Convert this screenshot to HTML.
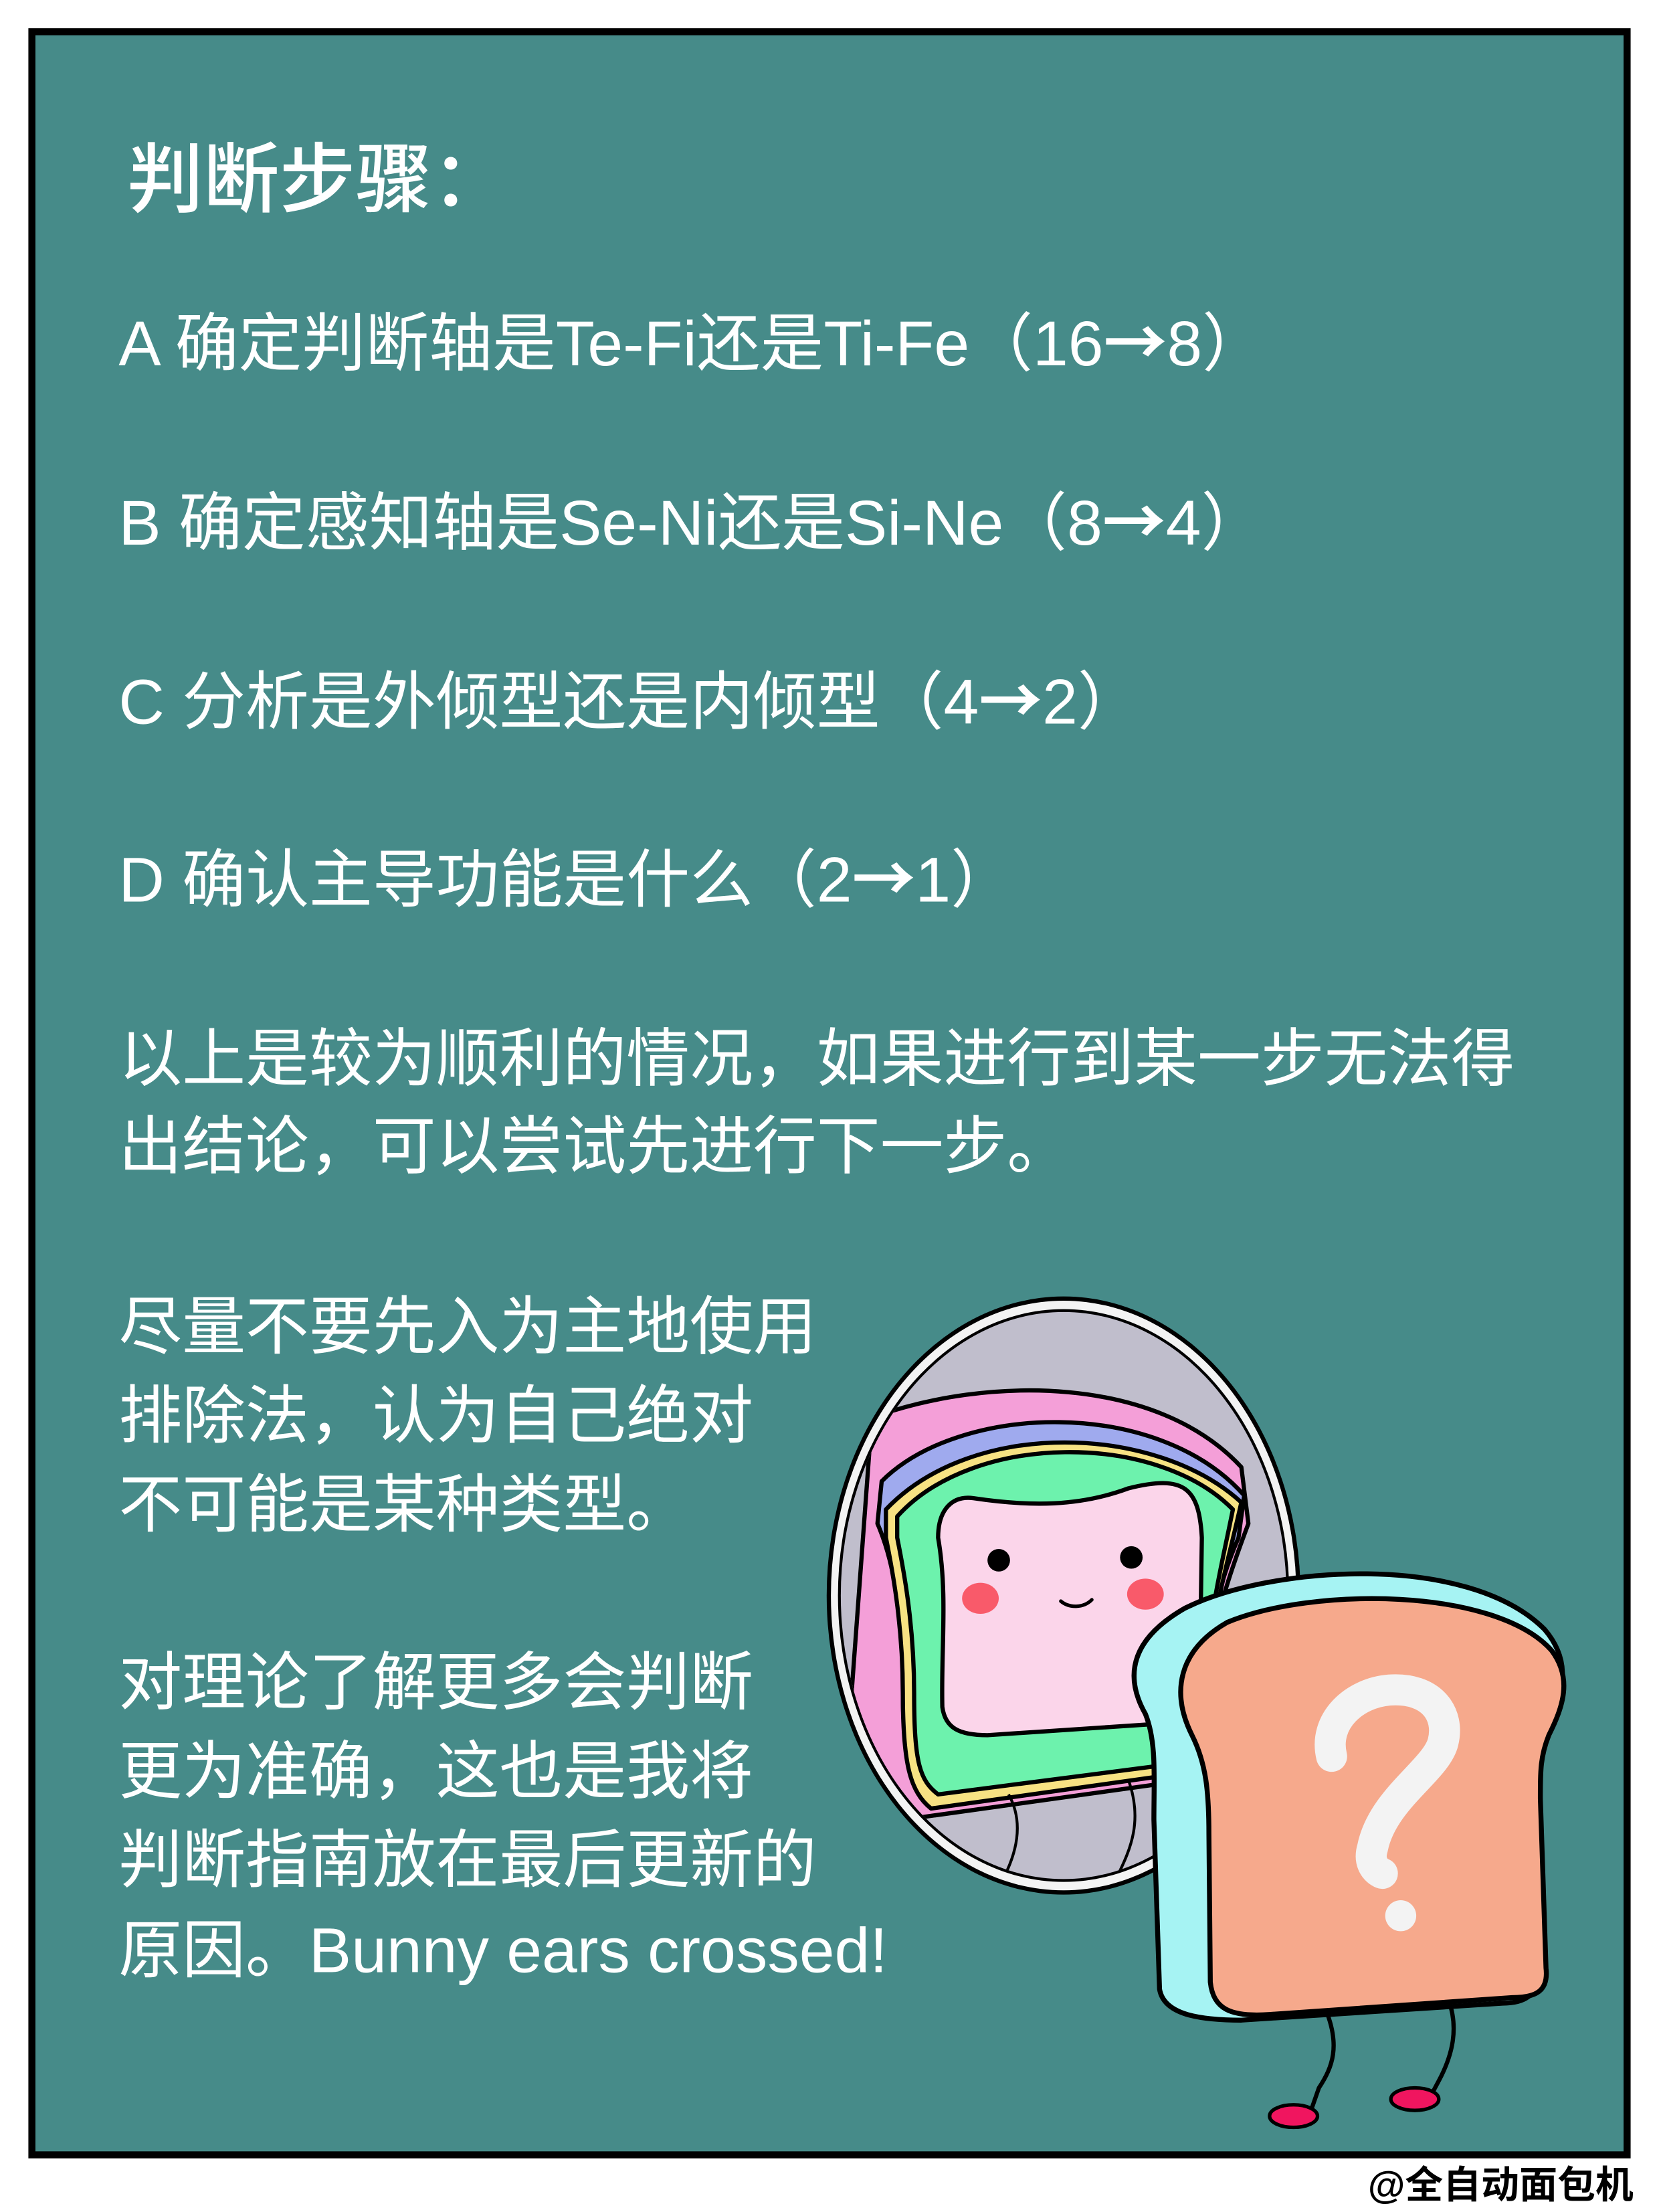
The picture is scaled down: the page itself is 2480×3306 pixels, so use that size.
<!DOCTYPE html>
<html><head><meta charset="utf-8"><style>
html,body{margin:0;padding:0;background:#fff;}
svg{display:block;}
text{font-family:"Liberation Sans","Noto Sans CJK SC",sans-serif;fill:#fff;}
.ar{font-family:"Noto Sans CJK SC",sans-serif;font-weight:bold;}
</style></head><body>
<svg width="2480" height="3306" viewBox="0 0 1176 1568" xmlns="http://www.w3.org/2000/svg">
<rect x="0" y="0" width="1176" height="1568" fill="#fff"/>
<rect x="22.5" y="22.5" width="1131" height="1505" fill="#468B89" stroke="#000" stroke-width="5"/>

<text x="90" y="146" font-size="54" style="font-family:'Noto Sans CJK SC',sans-serif;font-weight:500">判断步骤：</text>
<g font-size="45">
<text x="84" y="259">A 确定判断轴是Te-Fi还是Ti-Fe（16<tspan class="ar">→</tspan>8）</text>
<text x="84" y="386">B 确定感知轴是Se-Ni还是Si-Ne（8<tspan class="ar">→</tspan>4）</text>
<text x="84" y="513">C 分析是外倾型还是内倾型（4<tspan class="ar">→</tspan>2）</text>
<text x="84" y="639">D 确认主导功能是什么（2<tspan class="ar">→</tspan>1）</text>
<text x="84" y="766">以上是较为顺利的情况，如果进行到某一步无法得</text>
<text x="84" y="828">出结论，可以尝试先进行下一步。</text>
<text x="84" y="956">尽量不要先入为主地使用</text>
<text x="84" y="1019">排除法，认为自己绝对</text>
<text x="84" y="1082">不可能是某种类型。</text>
<text x="84" y="1208">对理论了解更多会判断</text>
<text x="84" y="1271">更为准确，这也是我将</text>
<text x="84" y="1334">判断指南放在最后更新的</text>
<text x="84" y="1398">原因。Bunny ears crossed!</text>
</g>

<defs><clipPath id="m"><ellipse cx="754" cy="1131" rx="158" ry="201"/></clipPath></defs>
<ellipse cx="754" cy="1131" rx="168" ry="212" fill="#000"/>
<ellipse cx="754" cy="1131" rx="165" ry="209" fill="#F3F3F3"/>
<ellipse cx="754" cy="1131" rx="160" ry="203" fill="#000"/>
<ellipse cx="754" cy="1131" rx="158" ry="201" fill="#C0BECC"/>
<g clip-path="url(#m)" stroke="#000" stroke-width="3" stroke-linejoin="round">
<path d="M618 1005 C700 975 820 975 880 1040 L885 1080 C870 1120 860 1150 860 1180 L855 1260 L640 1290 L600 1250 Z" fill="#F49FD8"/>
<path d="M625 1050 C680 995 820 990 882 1060 L878 1090 C865 1120 858 1150 856 1180 L850 1255 L655 1275 C645 1260 640 1240 640 1200 C640 1150 635 1110 622 1080 Z" fill="#9FAAEE"/>
<path d="M628 1070 C690 1005 820 1010 880 1065 C870 1110 860 1140 858 1180 L852 1255 L660 1282 C645 1270 640 1250 640 1200 C640 1150 632 1110 628 1090 Z" fill="#F7E283"/>
<path d="M636 1075 C690 1015 820 1015 874 1070 C866 1110 858 1140 856 1180 L850 1248 L665 1272 C652 1262 648 1250 648 1200 C648 1150 640 1110 636 1090 Z" fill="#6DF2AD"/>
<path d="M665 1090 C665 1070 675 1060 690 1062 C730 1068 765 1068 800 1055 C840 1045 850 1055 852 1090 L850 1220 L700 1230 C680 1230 670 1225 668 1210 C667 1170 672 1130 665 1090 Z" fill="#FBD5EA"/>
<path d="M715 1272 C725 1290 722 1310 712 1330 M800 1262 C810 1290 802 1310 792 1330" fill="none" stroke-width="2"/>
</g>
<circle cx="708" cy="1106" r="8" fill="#000"/>
<circle cx="802" cy="1104" r="8" fill="#000"/>
<ellipse cx="695" cy="1133" rx="13" ry="11" fill="#F95A6A"/>
<ellipse cx="812" cy="1130" rx="13" ry="11" fill="#F95A6A"/>
<path d="M752 1135 C758 1140 768 1140 774 1134" fill="none" stroke="#000" stroke-width="2.5" stroke-linecap="round"/>

<g fill="none" stroke="#000" stroke-width="3">
<path d="M940 1425 C950 1450 945 1465 935 1480 L928 1500"/>
<path d="M1027 1418 C1035 1440 1028 1460 1020 1475 L1012 1490"/>
</g>
<ellipse cx="917" cy="1500" rx="17" ry="8" fill="#F0155F" stroke="#000" stroke-width="2.5"/>
<ellipse cx="1003" cy="1488" rx="17" ry="8" fill="#F0155F" stroke="#000" stroke-width="2.5"/>

<g stroke="#000" stroke-width="3.5" stroke-linejoin="round">
<path d="M812 1215 C795 1185 805 1160 840 1140 C900 1110 1040 1100 1095 1155 C1112 1175 1110 1195 1100 1215 C1092 1230 1088 1240 1088 1260 L1090 1395 C1092 1415 1080 1420 1065 1420 L880 1432 C850 1432 825 1428 822 1410 L818 1290 C818 1260 820 1235 812 1215 Z" fill="#A6F3F3"/>
<path d="M845 1230 C830 1200 835 1170 870 1150 C930 1125 1060 1125 1100 1170 C1115 1190 1108 1210 1098 1230 C1092 1245 1092 1255 1092 1275 L1096 1395 C1098 1412 1088 1416 1072 1416 L900 1428 C872 1430 860 1424 858 1405 L857 1300 C857 1270 855 1250 845 1230 Z" fill="#F6A98C"/>
</g>
<g fill="none" stroke="#F3F3F3" stroke-width="22" stroke-linecap="round">
<path d="M944 1245 C938 1220 960 1200 985 1198 C1015 1196 1028 1215 1023 1235 C1018 1255 980 1275 973 1310 C970 1320 975 1326 980 1328"/>
</g>
<circle cx="993" cy="1358" r="11" fill="#F3F3F3"/>

<text x="1158" y="1558" text-anchor="end" font-size="27" font-weight="bold" style="fill:#000">@全自动面包机</text>
</svg>
</body></html>
